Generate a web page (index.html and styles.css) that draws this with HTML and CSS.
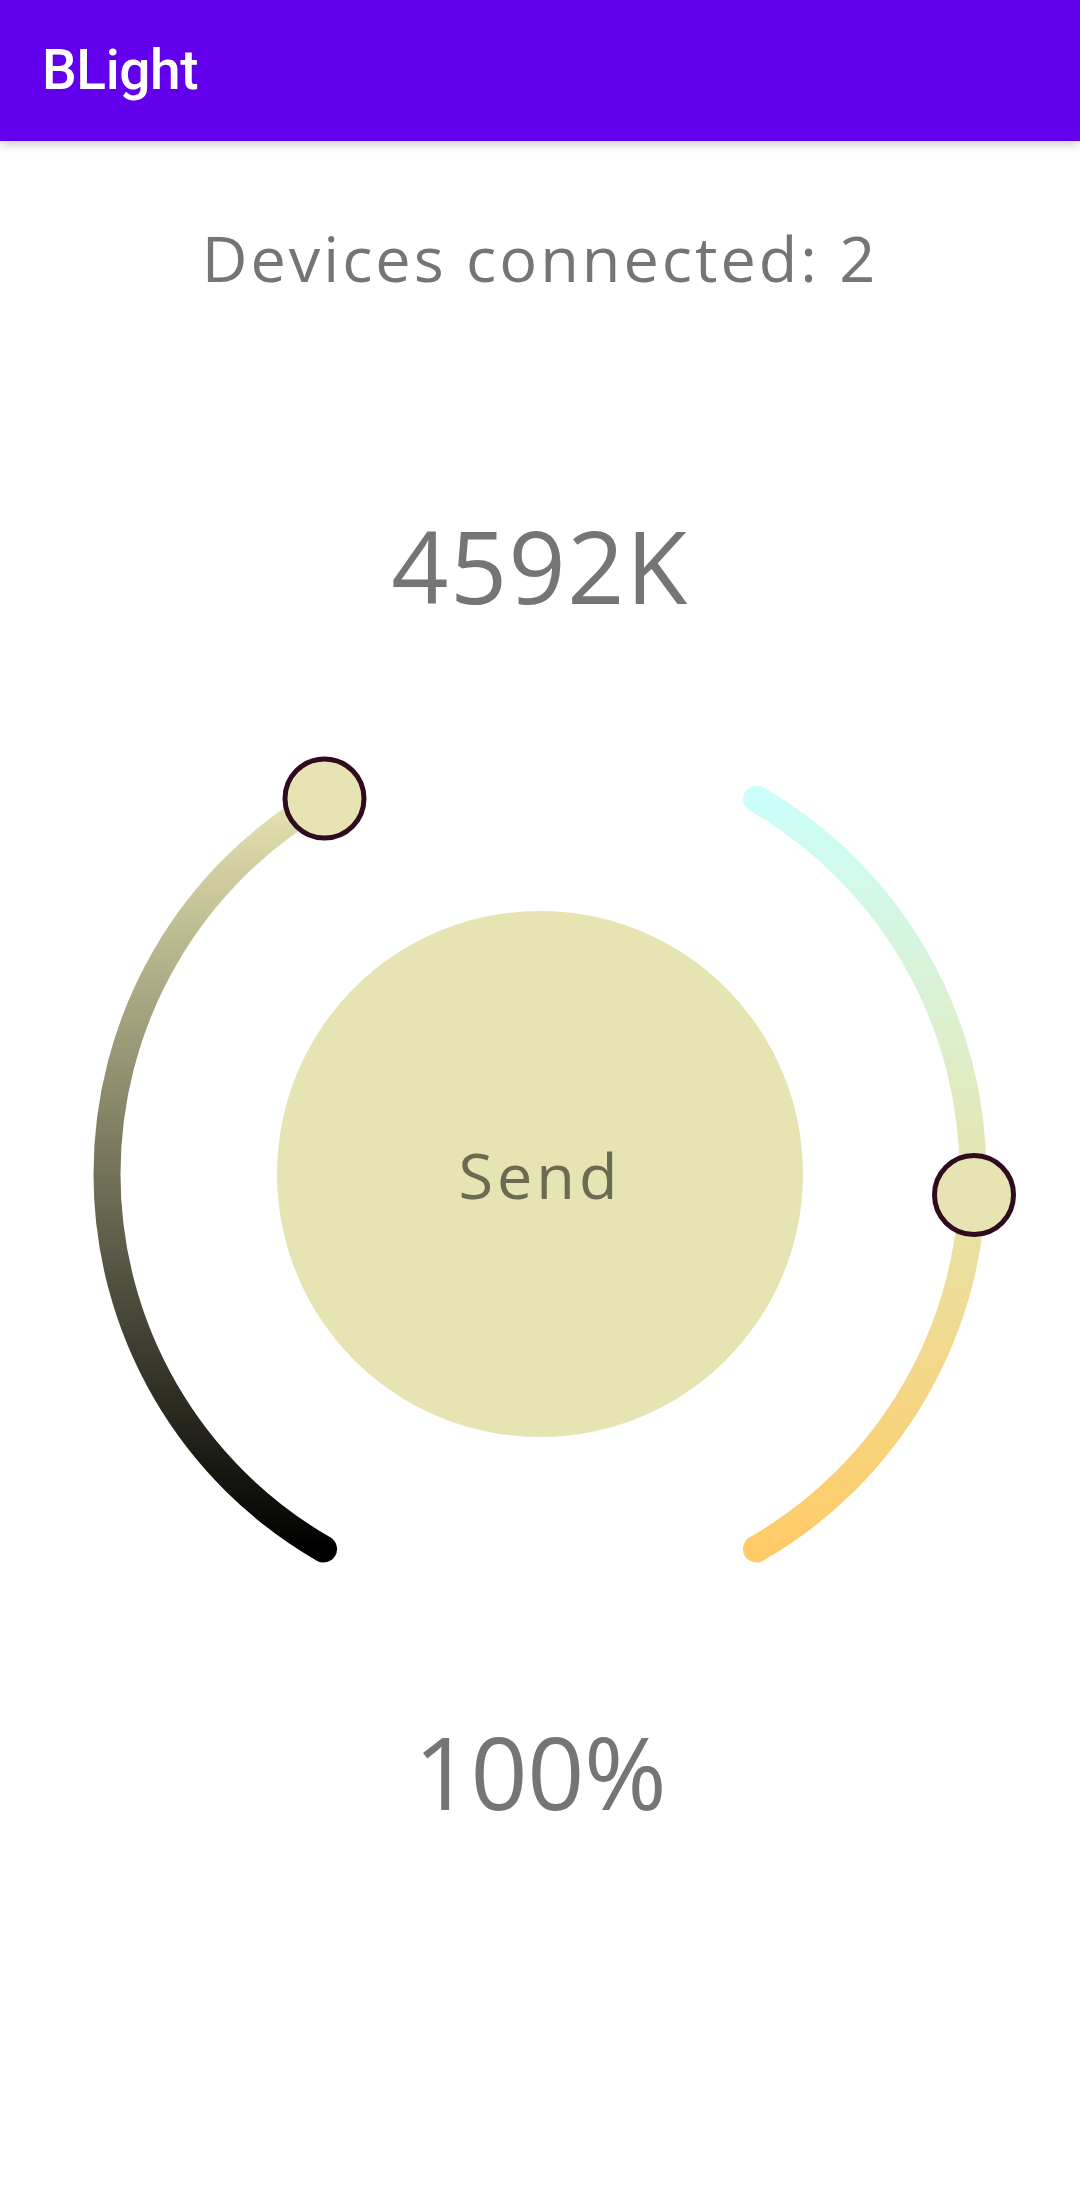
FILE: index.html
```html
<!DOCTYPE html>
<html lang="en">
<head>
<meta charset="utf-8">
<title>BLight</title>
<link rel="stylesheet" href="styles.css">
</head>
<body>
<header class="appbar">
  <h1 class="appbar-title">BLight</h1>
</header>
<main class="content">
  <p class="devices">Devices connected: 2</p>
  <p class="big-value temp">4592K</p>
  <div class="dial">
    <svg class="dial-canvas" width="1080" height="900" viewBox="0 0 1080 900" aria-hidden="true">
      <defs>
        <linearGradient id="gLeft" gradientUnits="userSpaceOnUse" x1="0" y1="75" x2="0" y2="825">
          <stop offset="0" stop-color="#E6E4B2"/>
          <stop offset="1" stop-color="#000000"/>
        </linearGradient>
        <linearGradient id="gRight" gradientUnits="userSpaceOnUse" x1="0" y1="75" x2="0" y2="825">
          <stop offset="0" stop-color="#CCFFFA"/>
          <stop offset="1" stop-color="#FFCB66"/>
        </linearGradient>
      </defs>
      <path d="M 323.5 75 A 433 433 0 0 0 323.5 825" fill="none" stroke="url(#gLeft)" stroke-width="27" stroke-linecap="round"/>
      <path d="M 756.5 75 A 433 433 0 0 1 756.5 825" fill="none" stroke="url(#gRight)" stroke-width="27" stroke-linecap="round"/>
      <circle cx="324.5" cy="74.5" r="39.5" fill="#E6E4B2" stroke="#300A1E" stroke-width="5"/>
      <circle cx="974" cy="471" r="39.5" fill="#E6E4B2" stroke="#300A1E" stroke-width="5"/>
    </svg>
    <button class="send" type="button">Send</button>
  </div>
  <p class="big-value percent">100%</p>
</main>
</body>
</html>
```

FILE: styles.css
```css
html, body {
  margin: 0;
  padding: 0;
  background: #ffffff;
}

body {
  width: 1080px;
  height: 2204px;
  overflow: hidden;
  font-family: "Open Sans", "Noto Sans", sans-serif;
}

.appbar {
  height: 141px;
  background: #6200EE;
  display: flex;
  align-items: center;
  padding: 0 42px;
  box-shadow: 0 3px 10px rgba(0, 0, 0, 0.22);
  position: relative;
  z-index: 1;
}

.appbar-title {
  margin: 0;
  color: #ffffff;
  font-family: Roboto, "Liberation Sans", sans-serif;
  font-weight: 500;
  font-size: 55px;
  line-height: 1;
  letter-spacing: -0.4px;
}

.content {
  display: flex;
  flex-direction: column;
  align-items: center;
}

.devices {
  margin: 85px 0 0;
  color: #757575;
  font-size: 63px;
  line-height: 63px;
  height: 63px;
  letter-spacing: 3px;
}

.big-value {
  margin: 0;
  color: #757575;
  font-size: 100px;
  line-height: 100px;
  height: 100px;
}

.temp {
  margin-top: 226px;
  letter-spacing: 1.5px;
}

.dial {
  margin-top: 109px;
  width: 1080px;
  height: 900px;
  display: grid;
  place-items: center;
}

.dial-canvas {
  grid-area: 1 / 1;
  display: block;
}

.send {
  grid-area: 1 / 1;
  width: 526px;
  height: 526px;
  border: none;
  border-radius: 50%;
  background: #E6E4B2;
  color: #6B6A52;
  font-family: "Open Sans", "Noto Sans", sans-serif;
  font-size: 63px;
  line-height: 1;
  letter-spacing: 4px;
  padding: 0;
  display: flex;
  align-items: center;
  justify-content: center;
}

.percent {
  margin-top: 97px;
  letter-spacing: -0.5px;
}
```
